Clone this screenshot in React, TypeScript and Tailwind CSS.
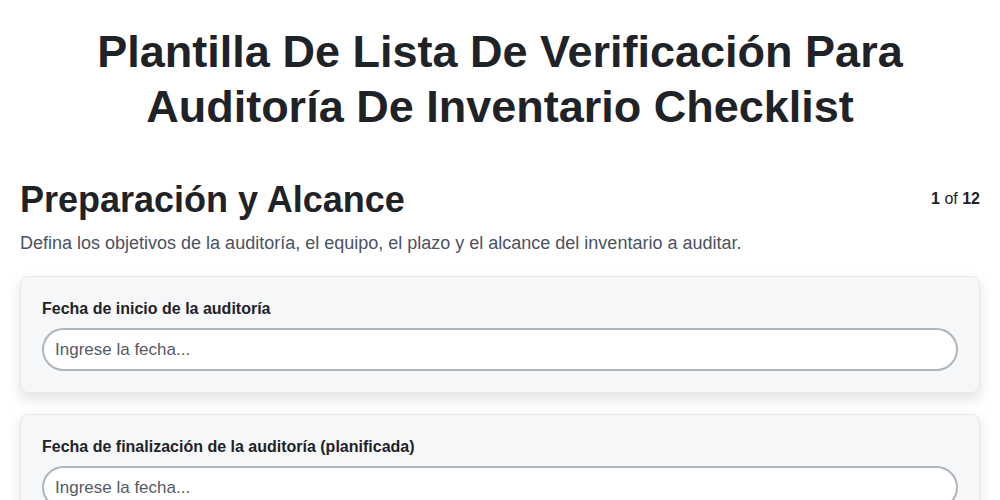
import React from 'react';

const fields = [
    { id: 'start', label: 'Fecha de inicio de la auditoría' },
    { id: 'end', label: 'Fecha de finalización de la auditoría (planificada)' },
    { id: 'team', label: 'Equipo auditor' },
];

const App: React.FC = () => {
    return (
        <div className="min-h-screen bg-white px-5 font-['Liberation_Sans',Arial,sans-serif] text-[#1f2328]">
            <h1 className="pt-[24px] text-center text-[45px] font-bold leading-[55px] text-[#1f2328]">
                Plantilla De Lista De Verificación Para
                <br />
                Auditoría De Inventario Checklist
            </h1>

            <div className="mt-[44px] flex items-start justify-between">
                <h2 className="text-[36px] font-bold leading-[44px]">Preparación y Alcance</h2>
                <div className="pt-[9px] text-[16px]">
                    <span className="font-bold">1</span> of <span className="font-bold">12</span>
                </div>
            </div>
            <p className="mt-[8px] text-[18px] leading-[27px] text-[#4b5262]">
                Defina los objetivos de la auditoría, el equipo, el plazo y el alcance del inventario a auditar.
            </p>

            <div className="mt-[19px] space-y-[21px]">
                {fields.map(field => (
                    <div
                        key={field.id}
                        className="rounded-lg border border-[#e5e7eb] bg-[#f6f7f9] px-[21px] pb-[21px] pt-[21px] shadow-[0_6px_14px_rgba(0,0,0,0.12)]"
                    >
                        <label htmlFor={field.id} className="mb-[9px] block text-[16px] font-bold leading-[21px] text-[#1f2328]">
                            {field.label}
                        </label>
                        <input
                            id={field.id}
                            type="text"
                            placeholder="Ingrese la fecha..."
                            className="block h-[43px] w-full rounded-full border-2 border-[#aeb5bd] bg-white px-[11px] text-[17px] text-[#1f2328] placeholder:text-[#555b66] outline-none"
                        />
                    </div>
                ))}
            </div>
        </div>
    );
};

export default App;
